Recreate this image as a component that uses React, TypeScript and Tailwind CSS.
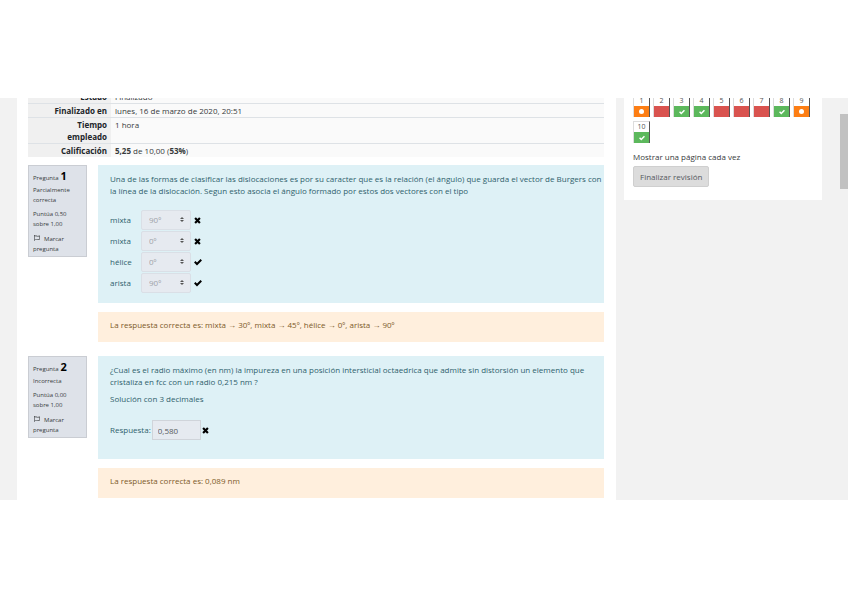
import type { ReactNode } from "react";
import { FaRegFlag } from "react-icons/fa";

type Status = "correct" | "incorrect" | "partial";

const navItems: { number: number; status: Status }[] = [
  { number: 1, status: "partial" },
  { number: 2, status: "incorrect" },
  { number: 3, status: "correct" },
  { number: 4, status: "correct" },
  { number: 5, status: "incorrect" },
  { number: 6, status: "incorrect" },
  { number: 7, status: "incorrect" },
  { number: 8, status: "correct" },
  { number: 9, status: "partial" },
  { number: 10, status: "correct" },
];

const matches = [
  { label: "mixta", value: "90º", correct: false },
  { label: "mixta", value: "0º", correct: false },
  { label: "hélice", value: "0º", correct: true },
  { label: "arista", value: "90º", correct: true },
];

const statusColors: Record<Status, string> = {
  correct: "bg-[#5cb85c]",
  incorrect: "bg-[#d9534f]",
  partial: "bg-[#fd7e14]",
};

function CheckIcon({ className }: { className: string }) {
  return (
    <svg viewBox="0 0 16 16" className={className} fill="none" stroke="currentColor" strokeWidth="4">
      <path d="M1.5 7.5 6 12 14.5 3.5" />
    </svg>
  );
}

function CrossIcon({ className }: { className: string }) {
  return (
    <svg viewBox="0 0 16 16" className={className} fill="none" stroke="currentColor" strokeWidth="5">
      <path d="M2.5 2.5 13.5 13.5M13.5 2.5 2.5 13.5" />
    </svg>
  );
}

function SummaryRow({ label, children }: { label: string; children: ReactNode }) {
  return (
    <tr className="border-t border-[#dee2e6] align-top">
      <th className="w-[83px] bg-[#f0f0f0] pt-px pr-1 pl-6 text-right font-bold text-[#212529]">
        {label}
      </th>
      <td className="bg-[#fafafa] pt-px pl-1">{children}</td>
    </tr>
  );
}

function QuestionInfo({ number, state, grade }: { number: number; state: string; grade: string }) {
  return (
    <div className="w-[59px] shrink-0 border border-[#cacdd3] bg-[#dee2e9] pt-1 pr-1 pb-[2px] pl-1 text-[6px] leading-[10px] text-[#373a3c]">
      <h3 className="flex h-3 items-baseline gap-[2px] leading-3">
        Pregunta <span className="text-[11px] font-bold text-black">{number}</span>
      </h3>
      <p className="mt-[3px]">{state}</p>
      <p className="mt-1">
        Puntúa {grade}
        <br />
        sobre 1,00
      </p>
      <a href="#" className="mt-[5px] block">
        <FaRegFlag className="mr-1 ml-px inline size-[6px] align-baseline" />
        Marcar pregunta
      </a>
    </div>
  );
}

function Question({ info, children, feedback }: { info: ReactNode; children: ReactNode; feedback: ReactNode }) {
  return (
    <section className="flex items-start gap-[11px]">
      {info}
      <div className="min-w-0 flex-1">
        <div className="bg-[#def1f6] pt-2 pl-3 text-[#2f5f6c]">{children}</div>
        <div className="mt-[9px] bg-[#ffefdd] px-3 pt-[7px] pb-[11px] text-[#7d5a29]">{feedback}</div>
      </div>
    </section>
  );
}

function NavButton({ number, status }: { number: number; status: Status }) {
  return (
    <a
      href="#"
      className="flex h-[22px] w-[17px] flex-col border-x border-t border-[#ddd] border-r-[#555] text-center text-[7px] leading-[10px] text-[#555]"
    >
      <span>{number}</span>
      <span className={`flex flex-1 items-center justify-center text-white ${statusColors[status]}`}>
        {status === "correct" && <CheckIcon className="size-[6px]" />}
        {status === "partial" && <span className="size-[5px] rounded-full bg-white" />}
      </span>
    </a>
  );
}

export default function App() {
  return (
    <div className="min-h-screen bg-white pt-[98px] font-['Open_Sans','Noto_Sans',sans-serif] text-[8px] leading-3 text-[#373a3c]">
      <div className="flex overflow-hidden bg-[#f2f2f2] pl-[17px]">
        <main className="min-w-0 flex-1 bg-white pr-3 pb-[2px] pl-[11px]">
          <table className="-mt-[9px] mb-2 w-full border-collapse">
            <tbody>
              <SummaryRow label="Estado">Finalizado</SummaryRow>
              <SummaryRow label="Finalizado en">lunes, 16 de marzo de 2020, 20:51</SummaryRow>
              <SummaryRow label="Tiempo empleado">1 hora</SummaryRow>
              <SummaryRow label="Calificación">
                <b>5,25</b> de 10,00 (<b>53%</b>)
              </SummaryRow>
            </tbody>
          </table>

          <div className="flex flex-col gap-[14px]">
            <Question
              info={<QuestionInfo number={1} state="Parcialmente correcta" grade="0,50" />}
              feedback="La respuesta correcta es: mixta → 30º, mixta → 45º, hélice → 0º, arista → 90º"
            >
              <p>
                Una de las formas de clasificar las dislocaciones es por su caracter que es la relación (el ángulo) que
                guarda el vector de Burgers con la línea de la dislocación. Segun esto asocia el ángulo formado por
                estos dos vectores con el tipo
              </p>
              <div className="mt-[13px] flex flex-col gap-px pb-[10px]">
                {matches.map((match, i) => (
                  <div key={i} className="flex items-center">
                    <label htmlFor={`match-${i}`} className="w-[31px]">
                      {match.label}
                    </label>
                    <div className="relative">
                      <select
                        id={`match-${i}`}
                        disabled
                        className="block h-5 w-[50px] appearance-none rounded-xs border border-[#dadfe6] bg-[#e6eaf0] pl-[7px] text-[#9ea3a9] opacity-100"
                      >
                        <option>{match.value}</option>
                      </select>
                      <svg
                        viewBox="0 0 4 5"
                        className="pointer-events-none absolute top-[7px] right-[7px] h-[5px] w-1 fill-[#555]"
                      >
                        <path d="M2 0 0 2h4zM2 5 0 3h4z" />
                      </svg>
                    </div>
                    {match.correct ? (
                      <CheckIcon className="ml-[3px] size-2 text-black" />
                    ) : (
                      <CrossIcon className="ml-[3px] size-[7px] text-black" />
                    )}
                  </div>
                ))}
              </div>
            </Question>

            <Question
              info={<QuestionInfo number={2} state="Incorrecta" grade="0,00" />}
              feedback="La respuesta correcta es: 0,089 nm"
            >
              <p className="pr-3">
                ¿Cual es el radio máximo (en nm) la impureza en una posición intersticial octaedrica que admite sin
                distorsión un elemento que cristaliza en fcc con un radio 0,215 nm ?
              </p>
              <p className="mt-[5px]">Solución con 3 decimales</p>
              <div className="mt-[15px] flex items-center pb-[19px]">
                <label htmlFor="answer">Respuesta:</label>
                <input
                  id="answer"
                  type="text"
                  readOnly
                  value="0,580"
                  className="ml-px h-5 w-[49px] border border-[#d0d4da] bg-[#e6eaf0] px-[5px] text-[#55595c]"
                />
                <CrossIcon className="ml-px size-[7px] text-black" />
              </div>
            </Question>
          </div>
        </main>

        <aside className="flex w-[232px] shrink-0 items-start pl-2">
          <div className="flex-1 bg-white px-[9px] pb-[13px]">
            <nav className="-mt-[3px] flex flex-wrap gap-x-[3px] gap-y-1">
              {navItems.map((item) => (
                <NavButton key={item.number} {...item} />
              ))}
            </nav>
            <a href="#" className="mt-2 block">
              Mostrar una página cada vez
            </a>
            <button
              type="button"
              className="mt-[3px] block h-[21px] rounded-xs border border-[#cfcfcf] bg-[#dcdcdc] px-[6px] text-[#55595c]"
            >
              Finalizar revisión
            </button>
          </div>
          <div className="ml-[18px] w-2 self-stretch bg-[#f1f1f1] pt-4">
            <div className="h-[75px] bg-[#c1c1c1]" />
          </div>
        </aside>
      </div>
    </div>
  );
}
